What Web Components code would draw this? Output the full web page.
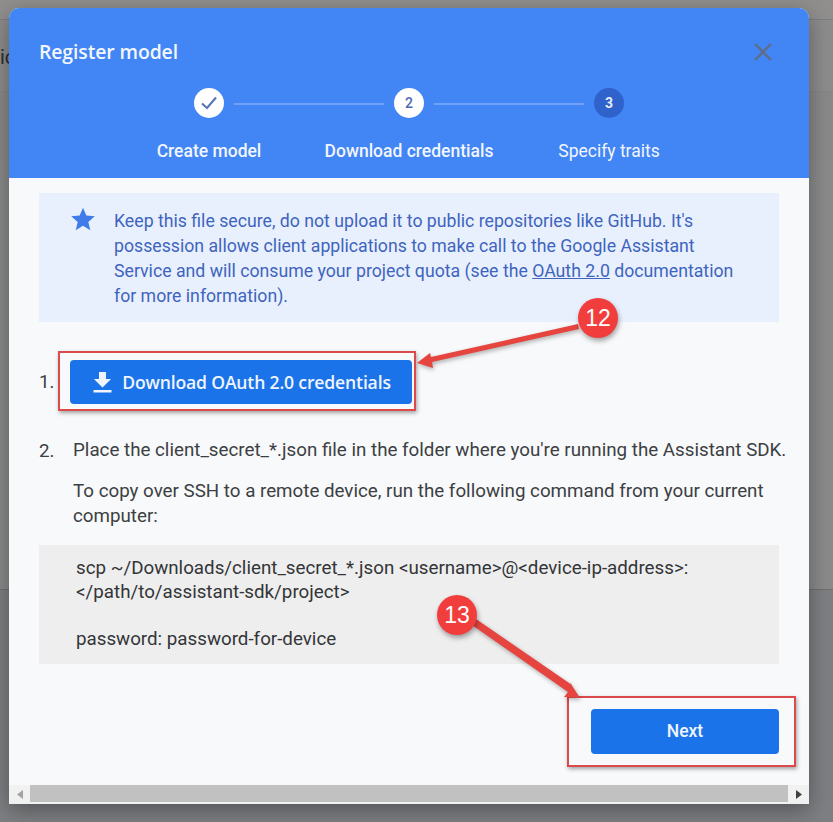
<!DOCTYPE html>
<html>
<head>
<meta charset="utf-8">
<style>
  html, body { margin: 0; padding: 0; }
  body { font-family: Roboto, "Liberation Sans", sans-serif; }
</style>
</head>
<body>
<page-backdrop>
  <register-dialog></register-dialog>
</page-backdrop>

<script>
class PageBackdrop extends HTMLElement {
  constructor() {
    super();
    this.attachShadow({ mode: 'open' });
    this.shadowRoot.innerHTML = `
      <style>
        :host {
          display: block;
          position: relative;
          width: 833px;
          height: 822px;
          box-sizing: border-box;
          padding: 8px 24px 18px 9px;
          overflow: hidden;
          background: linear-gradient(to bottom,
            #918e8e 0, #918e8e 19px, #7d7d7d 19px, #7d7d7d 20px,
            #8d8c8c 20px, #8d8c8c 91px, #858585 91px, #858585 92px,
            #8a8989 92px, #8a8989 161px, #8b8a8a 161px, #8b8a8a 589px,
            #707070 589px, #707070 590px, #7e7f82 590px, #7e7f82 100%);
        }
        .behind {
          position: absolute;
          left: 0;
          top: 45px;
          font-size: 20px;
          color: #2e2e2e;
        }
      </style>
      <span class="behind">ic</span>
      <slot></slot>
    `;
  }
}

class RegisterDialog extends HTMLElement {
  constructor() {
    super();
    this.attachShadow({ mode: 'open' });
    this.shadowRoot.innerHTML = `
      <style>
        :host {
          display: flex;
          flex-direction: column;
          position: relative;
          width: 800px;
          height: 796px;
          border-radius: 10px 10px 0 0;
          background-color: #f8f9fa;
          box-shadow: 0 6px 22px rgba(0, 0, 0, 0.35);
          color: #3c4043;
          overflow: hidden;
        }
        header {
          background-color: #4285f4;
          height: 170px;
          flex: none;
          box-sizing: border-box;
          padding: 31px 30px 0;
          color: #fff;
        }
        .title-row {
          display: flex;
          align-items: center;
          justify-content: space-between;
          height: 25px;
          padding-right: 6px;
        }
        h1 {
          margin: 0;
          font: 600 19.4px "Open Sans", Roboto, sans-serif;
          letter-spacing: -0.1px;
          color: #f3f7fe;
        }
        .steps {
          display: flex;
          justify-content: center;
          margin-top: 24px;
        }
        main {
          flex: 1;
          padding: 15px 30px 0;
          font-size: 18.75px;
          line-height: 25px;
          min-height: 0;
        }
        p { margin: 0; }
        .row {
          display: flex;
        }
        .num { width: 31px; flex: none; }
        .row.first { margin-top: 38px; height: 44px; align-items: center; }
        .row.second { margin-top: 34px; display: block; padding-left: 34px; position: relative; }
        .row.second .num { position: absolute; left: 0; top: 1px; }
        .row.second p { white-space: nowrap; }
        .row.second p + p { margin-top: 16px; white-space: normal; }
        code-block { margin-top: 16px; }
        .actions {
          display: flex;
          justify-content: flex-end;
          margin-top: 45px;
        }
      </style>
      <header>
        <div class="title-row">
          <h1>Register model</h1>
          <svg width="20" height="20" viewBox="0 0 20 20" fill="none" stroke="#5f6d87" stroke-width="2.4">
            <path d="M2 2 L18 18 M18 2 L2 18"/>
          </svg>
        </div>
        <div class="steps">
          <step-item label="Create model" state="done"></step-item>
          <step-item label="Download credentials" state="current" number="2" line></step-item>
          <step-item label="Specify traits" state="todo" number="3" line></step-item>
        </div>
      </header>
      <main>
        <info-note>Keep this file secure, do not upload it to public repositories like GitHub. It's possession allows client applications to make call to the Google Assistant Service and will consume your project quota (see the <a>OAuth 2.0</a> documentation for more information).</info-note>
        <div class="row first">
          <span class="num">1.</span>
          <action-button icon wide>Download OAuth 2.0 credentials</action-button>
        </div>
        <div class="row second">
          <span class="num">2.</span>
          <p>Place the client_secret_*.json file in the folder where you're running the Assistant SDK.</p>
          <p>To copy over SSH to a remote device, run the following command from your current computer:</p>
        </div>
        <code-block>scp ~/Downloads/client_secret_*.json &lt;username&gt;@&lt;device-ip-address&gt;:
&lt;/path/to/assistant-sdk/project&gt;

password: password-for-device</code-block>
        <div class="actions">
          <action-button>Next</action-button>
        </div>
      </main>
      <h-scrollbar></h-scrollbar>
      <call-outs></call-outs>
    `;
  }
}

class StepItem extends HTMLElement {
  connectedCallback() {
    const state = this.getAttribute('state');
    const mark = state === 'done'
      ? `<svg width="20" height="20" viewBox="0 0 20 20" fill="none" stroke="#5b77b8" stroke-width="2.2"><path d="M3 10.5 L8 15 L17 4.5"/></svg>`
      : this.getAttribute('number');
    this.attachShadow({ mode: 'open' });
    this.shadowRoot.innerHTML = `
      <style>
        :host {
          display: flex;
          flex-direction: column;
          align-items: center;
          position: relative;
          width: 200px;
          color: #f1f6fe;
        }
        .circle {
          width: 30px;
          height: 30px;
          border-radius: 50%;
          display: flex;
          align-items: center;
          justify-content: center;
          font-size: 14px;
          font-weight: 500;
          background-color: #fff;
          color: #4a68b5;
        }
        :host([state='todo']) .circle {
          background-color: #2f62cb;
          color: #e8effc;
          font-weight: 700;
        }
        .line {
          position: absolute;
          left: -75px;
          top: 15px;
          width: 150px;
          height: 2px;
          background-color: #6ea1f7;
        }
        .label {
          margin-top: 21px;
          font-size: 17.5px;
          line-height: 24px;
          font-weight: 500;
          white-space: nowrap;
        }
        :host([state='todo']) .label { font-weight: 400; }
      </style>
      ${this.hasAttribute('line') ? '<div class="line"></div>' : ''}
      <div class="circle">${mark}</div>
      <div class="label">${this.getAttribute('label')}</div>
    `;
  }
}

class InfoNote extends HTMLElement {
  constructor() {
    super();
    this.attachShadow({ mode: 'open' });
    this.shadowRoot.innerHTML = `
      <style>
        :host {
          display: flex;
          height: 129px;
          box-sizing: border-box;
          padding: 16px 30px 0 32px;
          gap: 19px;
          background-color: #e8f0fe;
          color: #3f64bd;
          font-size: 17.7px;
          font-weight: 400;
        }
        svg { flex: none; margin-top: -2px; }
        ::slotted(a) { text-decoration: underline; }
      </style>
      <svg width="24" height="24" viewBox="0 0 24 24" fill="#3f7ce9">
        <path d="M12 .8 L15.3 8.6 L23.8 9.3 L17.3 14.9 L19.3 23.2 L12 18.8 L4.7 23.2 L6.7 14.9 L.2 9.3 L8.7 8.6 Z"/>
      </svg>
      <div><slot></slot></div>
    `;
  }
}

class ActionButton extends HTMLElement {
  constructor() {
    super();
    this.attachShadow({ mode: 'open' });
    this.shadowRoot.innerHTML = `
      <style>
        :host {
          display: flex;
          align-items: center;
          justify-content: center;
          gap: 10px;
          width: 188px;
          height: 45px;
          box-sizing: border-box;
          padding-bottom: 2px;
          border-radius: 4px;
          background-color: #1a73e8;
          color: #eef5fe;
          font: 500 17.5px Roboto, sans-serif;
        }
        :host([wide]) {
          width: 342px;
          height: 44px;
          padding-bottom: 0;
          font: 600 17.6px "Open Sans", Roboto, sans-serif;
          letter-spacing: -0.17px;
        }
        svg { display: none; }
        :host([icon]) svg { display: block; margin-left: 2px; }
      </style>
      <svg width="19" height="21" viewBox="0 0 19 21" fill="#eef5fe">
        <path d="M6 0 H13 V7 H18 L9.5 15.5 L1 7 H6 Z M0.5 18 H18.5 V20.5 H0.5 Z"/>
      </svg>
      <slot></slot>
    `;
  }
}

class CodeBlock extends HTMLElement {
  constructor() {
    super();
    this.attachShadow({ mode: 'open' });
    this.shadowRoot.innerHTML = `<style>
        :host {
          display: block;
          height: 119px;
          box-sizing: border-box;
          padding: 12px 37px 0;
          background-color: #eeeeee;
          color: #333538;
          line-height: 23.6px;
          white-space: pre-wrap;
        }
      </style><slot></slot>`;
  }
}

class HScrollbar extends HTMLElement {
  constructor() {
    super();
    this.attachShadow({ mode: 'open' });
    this.shadowRoot.innerHTML = `
      <style>
        :host {
          display: flex;
          align-items: stretch;
          flex: none;
          height: 19px;
          background-color: #f1f1f1;
        }
        .end {
          flex: none;
          width: 21px;
          display: flex;
          align-items: center;
          justify-content: center;
        }
        .thumb {
          flex: 1;
          height: 17px;
          background-color: #c1c1c1;
        }
      </style>
      <div class="end"><svg width="6" height="9"><path d="M6 0 V9 L0 4.5 Z" fill="#a3a3a3"/></svg></div>
      <div class="thumb"></div>
      <div class="end"><svg width="6" height="9"><path d="M0 0 V9 L6 4.5 Z" fill="#404040"/></svg></div>
    `;
  }
}

class CallOuts extends HTMLElement {
  constructor() {
    super();
    this.attachShadow({ mode: 'open' });
    this.shadowRoot.innerHTML = `
      <style>
        :host {
          position: absolute;
          inset: 0;
          display: block;
          pointer-events: none;
        }
        .box {
          position: absolute;
          box-sizing: border-box;
          border: 2px solid #dc4a4c;
          box-shadow: 1px 2px 4px rgba(0, 0, 0, 0.35);
        }
        .badge {
          position: absolute;
          width: 40px;
          height: 40px;
          border-radius: 50%;
          background-color: #f23d3d;
          box-shadow: 1px 3px 5px rgba(0, 0, 0, 0.35);
          color: #fff;
          font: 400 23px/40px "Liberation Sans", Arial, sans-serif;
          text-align: center;
        }
        svg { position: absolute; left: 0; top: 0; }
      </style>
      <div class="box" style="left:49px;top:343px;width:358px;height:60px"></div>
      <div class="box" style="left:558px;top:688px;width:229px;height:71px"></div>
      <svg width="800" height="796" fill="#e5443f" style="filter:drop-shadow(1px 2px 2px rgba(0,0,0,.3))">
        <path d="M569 316 L570 321 L423 354 L424 360 L408 355 L421 345 L422 349 Z"/>
        <path d="M463 617 L467 611 L563 677 L560 673 L571 690 L555 689 L559 684 Z"/>
      </svg>
      <div class="badge" style="left:569px;top:290px">12</div>
      <div class="badge" style="left:428px;top:587px">13</div>
    `;
  }
}

customElements.define('page-backdrop', PageBackdrop);
customElements.define('register-dialog', RegisterDialog);
customElements.define('step-item', StepItem);
customElements.define('info-note', InfoNote);
customElements.define('action-button', ActionButton);
customElements.define('code-block', CodeBlock);
customElements.define('h-scrollbar', HScrollbar);
customElements.define('call-outs', CallOuts);
</script>
</body>
</html>
